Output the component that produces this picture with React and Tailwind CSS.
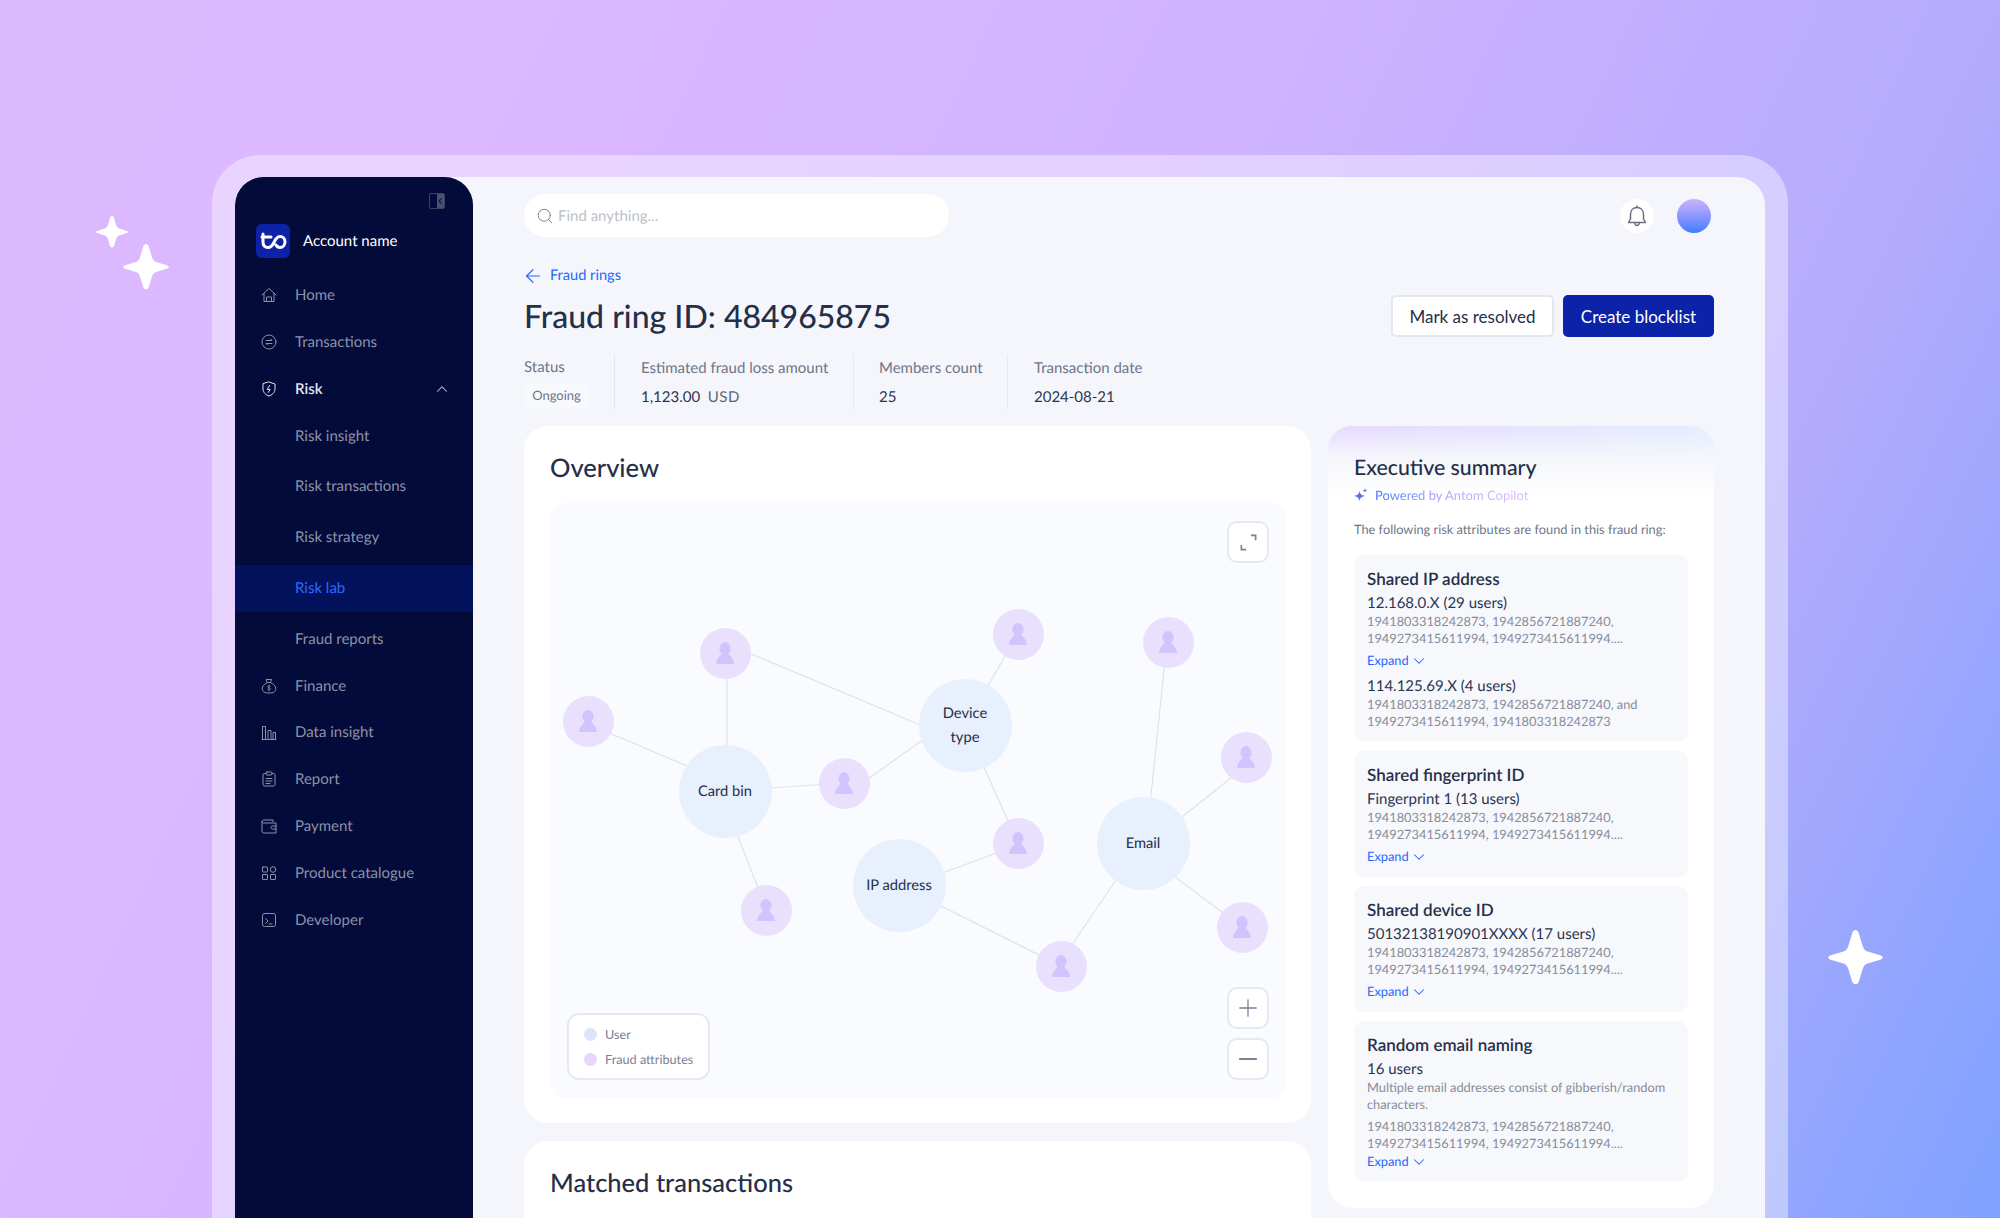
import { ChevronDown, ChevronUp, ArrowLeft, Search, Plus, Minus } from "lucide-react";

const STAR = "M50 0 C53 0 55 3 56 6 L63 29 C65 35 67 37 72 39 L95 46 C101 48 101 52 95 54 L72 61 C67 63 65 65 63 71 L56 94 C54 100 46 100 44 94 L37 71 C35 65 33 63 28 61 L5 54 C-1 52 -1 48 5 46 L28 39 C33 37 35 35 37 29 L44 6 C45 3 47 0 50 0 Z";

function Star({ className }) {
  return (
    <svg viewBox="0 0 100 100" className={className} fill="white">
      <path d={STAR} />
    </svg>
  );
}

function NavIcon({ children }) {
  return (
    <svg viewBox="0 0 16 16" className="w-4 h-4 shrink-0" fill="none" stroke="currentColor" strokeWidth="1" strokeLinecap="round" strokeLinejoin="round">
      {children}
    </svg>
  );
}

const icons = {
  home: (
    <NavIcon>
      <path d="M1 8 8 1.5 15 8M3 6.5V14.5H13V6.5M5.5 14.5V10H10.5V14.5" />
    </NavIcon>
  ),
  transactions: (
    <NavIcon>
      <circle cx="8" cy="8" r="7" />
      <path d="M5 6.5H11L9.5 5M11 9.5H5L6.5 11" />
    </NavIcon>
  ),
  risk: (
    <NavIcon>
      <path d="M8 1 14 3V8C14 11.5 11 14 8 15 5 14 2 11.5 2 8V3Z" />
      <path d="M8.6 4.5 6.2 8.4H9.2L7.2 11.5" />
    </NavIcon>
  ),
  finance: (
    <NavIcon>
      <path d="M5.5 1.5H10.5L9.5 4.5H6.5ZM6.5 4.5C3 6 1.2 8.6 1.2 10.8 1.2 13.4 3.4 15 8 15S14.8 13.4 14.8 10.8C14.8 8.6 13 6 9.5 4.5" />
      <path d="M9.4 8.2C9 7.6 7 7.4 6.8 8.6 6.6 10 9.6 9.6 9.4 11 9.2 12.2 7 12 6.6 11.3M8 6.9V12.8" strokeWidth="0.8" />
    </NavIcon>
  ),
  data: (
    <NavIcon>
      <path d="M1 14.5H15M1.5 14.5V1.5H4.5V14.5M7 14.5V5.5H10V14.5M12 14.5V7.5H14.5V14.5" />
    </NavIcon>
  ),
  report: (
    <NavIcon>
      <path d="M5 2.5H3.2C2.6 2.5 2 3 2 3.6V13.6C2 14.4 2.6 15 3.4 15H12.6C13.4 15 14 14.4 14 13.6V3.6C14 3 13.4 2.5 12.8 2.5H11" />
      <rect x="5" y="1" width="6" height="3" rx="1" />
      <path d="M5 7.5H11M5 10H11M5 12.5H9" />
    </NavIcon>
  ),
  payment: (
    <NavIcon>
      <path d="M12 3.5V2H3C1.9 2 1 2.8 1 4V13.5C1 14.3 1.7 15 2.5 15H15V5H2.5C1.7 5 1 4.5 1 3.6" />
      <path d="M15 8H11.5C10.6 8 10 8.7 10 9.5S10.6 11 11.5 11H15" />
    </NavIcon>
  ),
  product: (
    <NavIcon>
      <rect x="1.5" y="2" width="5" height="5" rx="0.5" />
      <circle cx="12" cy="4.5" r="2.8" />
      <rect x="1.5" y="9.5" width="5" height="5" rx="0.5" />
      <rect x="9.5" y="9.5" width="5" height="5" rx="0.5" />
    </NavIcon>
  ),
  developer: (
    <NavIcon>
      <rect x="1.5" y="1.5" width="13" height="13" rx="2" />
      <path d="M4.5 6.5 7 9 4.5 11.5M8 12H11" />
    </NavIcon>
  ),
};

function NavItem({ icon, label }) {
  return (
    <div className="h-[46.8px] flex items-center pl-[26px] gap-[18px] text-[15px] text-[#8d92a8]">
      {icon}
      <span>{label}</span>
    </div>
  );
}

function SubItem({ label, active }) {
  return (
    <div className={`h-[46.8px] flex items-center pl-[60px] text-[15px] ${active ? "bg-[#03125c] text-[#2a6bff]" : "text-[#8d92a8]"}`}>
      {label}
    </div>
  );
}

function Sidebar() {
  return (
    <aside className="w-[238px] shrink-0 bg-[#020b3a] rounded-t-[28px] pt-4">
      <div className="flex justify-end pr-[28px]">
        <svg viewBox="0 0 16 16" className="w-4 h-4" fill="none">
          <rect x="0.5" y="0.5" width="15" height="15" rx="1.5" stroke="#3b4363" />
          <rect x="8" y="1" width="7" height="14" fill="#4a5170" />
          <path d="M12.5 5.5 10 8 12.5 10.5" stroke="#0f1745" strokeWidth="1.2" />
        </svg>
      </div>
      <div className="mt-[15px] pl-[21px] flex items-center gap-[13px]">
        <div className="w-[34px] h-[34px] rounded-[6px] bg-[#0c22a8]">
          <svg viewBox="0 0 34 34" fill="none" stroke="white" strokeWidth="3" strokeLinecap="round">
            <path d="M7 10V18C7 21.5 9 23.5 12 23.5 15 23.5 16.5 21.5 18 18.5 19.2 15.8 20.5 12.5 24 12.5 27 12.5 29 14.8 29 17.8S27 23.5 24 23.5C22 23.5 20.8 22.5 20 21" />
            <path d="M6 13H15" />
          </svg>
        </div>
        <span className="text-[15px] text-white">Account name</span>
      </div>
      <nav className="mt-[14px]">
        <NavItem icon={icons.home} label="Home" />
        <NavItem icon={icons.transactions} label="Transactions" />
        <div className="h-[46.8px] flex items-center pl-[26px] pr-[22px] gap-[18px] text-[15px] font-semibold text-[#e4e6ee]">
          {icons.risk}
          <span className="flex-1">Risk</span>
          <ChevronUp className="w-[18px] h-[18px] text-[#c8cad6]" strokeWidth={1.4} />
        </div>
        <div className="flex flex-col gap-1">
          <SubItem label="Risk insight" />
          <SubItem label="Risk transactions" />
          <SubItem label="Risk strategy" />
          <SubItem label="Risk lab" active />
          <SubItem label="Fraud reports" />
        </div>
        <NavItem icon={icons.finance} label="Finance" />
        <NavItem icon={icons.data} label="Data insight" />
        <NavItem icon={icons.report} label="Report" />
        <NavItem icon={icons.payment} label="Payment" />
        <NavItem icon={icons.product} label="Product catalogue" />
        <NavItem icon={icons.developer} label="Developer" />
      </nav>
    </aside>
  );
}

const smallNodes = [
  [725, 653], [1018, 634], [1168, 642], [588, 721], [1246, 757],
  [844, 783], [1018, 843], [766, 910], [1242, 927], [1061, 966],
];

const bigNodes = [
  { x: 725, y: 791, label: ["Card bin"] },
  { x: 965, y: 725, label: ["Device", "type"] },
  { x: 899, y: 885, label: ["IP address"] },
  { x: 1143, y: 843, label: ["Email"] },
];

const edges = [
  [727, 653, 727, 791], [725, 643, 930, 729], [588, 724, 725, 782],
  [844, 783, 725, 791], [844, 796, 965, 710], [1018, 634, 965, 725],
  [1018, 843, 965, 725], [899, 889, 1018, 845], [725, 804, 766, 908],
  [1061, 966, 899, 885], [1061, 961, 1143, 840], [1167, 642, 1146, 843],
  [1246, 766, 1143, 848], [1143, 853, 1242, 927],
];

// graph panel starts at 550,503 in page coords
const OX = 550;
const OY = 503;

function GraphButton({ children, className = "" }) {
  return (
    <div className={`w-[42px] h-[42px] rounded-[10px] bg-white border-2 border-[#e6e9f3] flex items-center justify-center text-[#7a8096] ${className}`}>
      {children}
    </div>
  );
}

function Graph() {
  return (
    <div className="relative mt-[18px] w-[736px] h-[595px] rounded-[14px] bg-[#fafbfe]">
      <svg className="absolute inset-0 w-full h-full" fill="none" stroke="#dfe2ee" strokeWidth="1.2">
        {edges.map(([x1, y1, x2, y2], i) => (
          <line key={i} x1={x1 - OX} y1={y1 - OY} x2={x2 - OX} y2={y2 - OY} />
        ))}
      </svg>
      {smallNodes.map(([x, y], i) => (
        <div
          key={i}
          className="absolute w-[51px] h-[51px] -ml-[25.5px] -mt-[25.5px] rounded-full bg-[#e9e0fe] flex items-center justify-center"
          style={{ left: x - OX, top: y - OY }}
        >
          <svg viewBox="0 0 18 22" className="w-[18px] h-[22px]" fill="#d1c3fd">
            <ellipse cx="9" cy="6.5" rx="5.6" ry="6.5" />
            <path d="M5.5 11.5C5.2 14 0.6 15 0 22H18C17.4 15 12.8 14 12.5 11.5Z" />
          </svg>
        </div>
      ))}
      {bigNodes.map((n) => (
        <div
          key={n.label[0]}
          className="absolute w-[93px] h-[93px] -ml-[46.5px] -mt-[46.5px] rounded-full bg-[#e8effd] flex flex-col items-center justify-center text-[14.7px] leading-[24px] text-[#252f4a]"
          style={{ left: n.x - OX, top: n.y - OY }}
        >
          {n.label.map((t) => (
            <span key={t}>{t}</span>
          ))}
        </div>
      ))}
      <GraphButton className="absolute top-[18px] right-[17px]">
        <svg viewBox="0 0 16 16" className="w-[19px] h-[19px]" fill="none" stroke="currentColor" strokeWidth="1.4">
          <path d="M10 2H14V6M2 10V14H6" />
        </svg>
      </GraphButton>
      <div className="absolute right-[17px] bottom-[18px] flex flex-col gap-[9px]">
        <GraphButton>
          <Plus className="w-7 h-7" strokeWidth={1.1} />
        </GraphButton>
        <GraphButton>
          <Minus className="w-7 h-7" strokeWidth={1.6} />
        </GraphButton>
      </div>
      <div className="absolute left-[17px] bottom-[18px] w-[143px] h-[67px] rounded-[12px] bg-white border-2 border-[#e6e9f3] pl-[15px] flex flex-col justify-center gap-[7px] text-[12.7px] leading-[18px] text-[#7b8195]">
        <div className="flex items-center gap-[8px]">
          <span className="w-[13px] h-[13px] rounded-full bg-[#dfe3f8]" />
          User
        </div>
        <div className="flex items-center gap-[8px]">
          <span className="w-[13px] h-[13px] rounded-full bg-[#e4d6ff]" />
          Fraud attributes
        </div>
      </div>
    </div>
  );
}

function Expand({ className = "mt-[3px]" }) {
  return (
    <div className={`flex items-center gap-[1px] text-[12.8px] leading-[18px] text-[#1d66ff] ${className}`}>
      Expand
      <ChevronDown className="w-[18px] h-[18px] mt-[2px]" strokeWidth={1.4} />
    </div>
  );
}

function Ids({ text = ["1941803318242873, 1942856721887240,", "1949273415611994, 1949273415611994...."] }) {
  return (
    <div className="text-[12.8px] leading-[17px] text-[#868b9c]">
      {text.map((t) => (
        <div key={t}>{t}</div>
      ))}
    </div>
  );
}

function Attr({ title, children, className = "" }) {
  return (
    <div className={`rounded-[10px] bg-[#f7f8fb] px-[13px] pt-[13px] ${className}`}>
      <div className="text-[17px] leading-[22px] font-semibold text-[#252f4a]">{title}</div>
      {children}
    </div>
  );
}

function Sub({ children }) {
  return <div className="mt-[3px] text-[15px] leading-[20px] text-[#2a3350]">{children}</div>;
}

function Summary() {
  return (
    <div className="w-[386px] h-[782px] rounded-[24px] bg-white bg-[linear-gradient(180deg,rgba(255,255,255,0)_0%,#f5f6fb_45%,#ffffff_100%),linear-gradient(90deg,#e6d9ff,#e4edff)] bg-no-repeat bg-size-[100%_70px] pt-[27px] px-[26px]">
      <div className="text-[21.3px] leading-[28px] font-medium text-[#252f4a]">Executive summary</div>
      <div className="mt-[5px] flex items-center gap-[7px] text-[13px] leading-[18px]">
        <svg viewBox="0 0 14 14" className="w-[14px] h-[14px]" fill="#5b6ff5">
          <path d="M5.5 2.5C6 6 7 7 11 8 7 8.8 6 10 5.5 13.5 5 10 4 8.8 0 8 4 7 5 6 5.5 2.5Z" />
          <path d="M11 0C11.2 1.6 11.6 2 13.4 2.4 11.6 2.8 11.2 3.2 11 4.8 10.8 3.2 10.4 2.8 8.6 2.4 10.4 2 10.8 1.6 11 0Z" />
        </svg>
        <span className="bg-linear-to-r from-[#3b76ff] via-[#b9a6ff] to-[#dcbcff] bg-clip-text text-transparent">Powered by Antom Copilot</span>
      </div>
      <div className="mt-[16px] text-[12.8px] leading-[18px] text-[#6f7588]">The following risk attributes are found in this fraud ring:</div>
      <div className="mt-[17px] flex flex-col gap-[9px]">
        <Attr title="Shared IP address" className="h-[187px]">
          <Sub>12.168.0.X (29 users)</Sub>
          <Ids />
          <Expand />
          <div className="mt-[6px]">
            <Sub>114.125.69.X (4 users)</Sub>
            <Ids text={["1941803318242873, 1942856721887240, and", "1949273415611994, 1941803318242873"]} />
          </div>
        </Attr>
        <Attr title="Shared fingerprint ID" className="h-[126px]">
          <Sub>Fingerprint 1 (13 users)</Sub>
          <Ids />
          <Expand />
        </Attr>
        <Attr title="Shared device ID" className="h-[126px]">
          <Sub>50132138190901XXXX (17 users)</Sub>
          <Ids />
          <Expand />
        </Attr>
        <Attr title="Random email naming" className="h-[161px]">
          <Sub>16 users</Sub>
          <Ids text={["Multiple email addresses consist of gibberish/random", "characters."]} />
          <div className="mt-[5px]">
            <Ids />
          </div>
          <Expand className="-mt-[1px]" />
        </Attr>
      </div>
    </div>
  );
}

function Stat({ label, value, className = "" }) {
  return (
    <div className={`h-[55px] flex flex-col ${className}`}>
      <div className="text-[15px] leading-[20px] mt-[4px] text-[#6f7588]">{label}</div>
      <div className="text-[15px] leading-[20px] mt-[9px] text-[#2a3350]">{value}</div>
    </div>
  );
}

export default function App() {
  return (
    <div className="w-[2000px] h-[1218px] overflow-hidden flex flex-col relative bg-[linear-gradient(115deg,#ddb9ff_0%,#dab7ff_25%,#cfb3ff_50%,#b5abfd_78%,#7ea2ff_100%)] font-['Lato','Noto_Sans',sans-serif] [text-rendering:geometricPrecision]">
      <Star className="absolute left-[96px] top-[216px] w-8 h-8" />
      <Star className="absolute left-[123px] top-[244px] w-[46px] h-[46px]" />
      <Star className="absolute left-[1828px] top-[930px] w-[55px] h-[55px]" />

      <div className="mt-[155px] mx-[212px] flex-1 min-h-0 rounded-t-[48px] bg-white/40 pt-[22px] px-[23px] flex">
        <div className="flex-1 flex rounded-t-[28px] bg-[#f4f6fb] overflow-hidden">
          <Sidebar />
          <main className="flex-1 px-[51px] pt-[17px]">
            <div className="flex items-center justify-between pr-[3px]">
              <div className="w-[425px] h-[43px] rounded-full bg-white flex items-center pl-[12px] gap-[4px] text-[15px] text-[#bcc0cc]">
                <Search className="w-[18px] h-[18px] text-[#7a8096]" strokeWidth={1.3} />
                <span className="pt-[1px]">Find anything...</span>
              </div>
              <div className="flex items-center gap-[23px]">
                <div className="w-[34px] h-[34px] rounded-full bg-white flex items-center justify-center">
                  <svg viewBox="0 0 24 24" className="w-6 h-6 text-[#6b7080]" fill="none" stroke="currentColor" strokeWidth="1.5" strokeLinecap="round" strokeLinejoin="round">
                    <path d="M12 3.5C8 3.5 5.5 6.5 5.5 10.5V15L3.5 18.5H20.5L18.5 15V10.5C18.5 6.5 16 3.5 12 3.5Z" />
                    <path d="M9.5 18.5C9.8 20.3 10.8 21.5 12 21.5S14.2 20.3 14.5 18.5M12 3.5V2" />
                  </svg>
                </div>
                <div className="w-[34px] h-[34px] rounded-full bg-linear-to-b from-[#d0b0ff] to-[#3f7bff]" />
              </div>
            </div>

            <div className="mt-[29px] h-5 flex items-center gap-[6px] text-[14.6px] leading-[20px] text-[#1d66ff]">
              <ArrowLeft className="w-[22px] h-[22px] -ml-[2px]" strokeWidth={1.3} />
              Fraud rings
            </div>

            <div className="mt-[9px] h-[42px] flex items-center justify-between">
              <h1 className="text-[32px] leading-[42px] font-medium text-[#252f4a]">Fraud ring ID: 484965875</h1>
              <div className="flex gap-[9px]">
                <button className="w-[163px] h-[42px] pt-[1px] rounded-[5px] bg-white border-2 border-[#e3e7f1] text-[17px] text-[#252f4a]">Mark as resolved</button>
                <button className="w-[151px] h-[42px] pt-[1px] rounded-[5px] bg-[#0c22a8] text-[17px] text-white">Create blocklist</button>
              </div>
            </div>

            <div className="mt-[17px] flex">
              <div className="w-[91px] h-[55px] border-r border-[#dfe7f8]">
                <div className="text-[15px] leading-[20px] mt-[3px] text-[#6f7588]">Status</div>
                <div className="mt-[6px] w-[65px] h-[26px] rounded-[4px] bg-[#f8f9fc] flex items-center justify-center text-[13px] text-[#6f7588]">Ongoing</div>
              </div>
              <Stat
                className="pl-[26px] w-[239px] border-r border-[#e6e9f2]"
                label="Estimated fraud loss amount"
                value={
                  <>
                    1,123.00 &nbsp;<span className="text-[#5d6378] tracking-[0.5px]">USD</span>
                  </>
                }
              />
              <Stat className="pl-[25px] w-[154px] border-r border-[#e6e9f2]" label="Members count" value="25" />
              <Stat className="pl-[26px]" label="Transaction date" value="2024-08-21" />
            </div>

            <div className="mt-[17px] flex items-start gap-[17px]">
              <div className="w-[787px] flex flex-col gap-[18px]">
                <section className="h-[697px] rounded-[24px] bg-white pt-[25px] pl-[26px]">
                  <h2 className="text-[25.5px] leading-[34px] font-medium text-[#252f4a]">Overview</h2>
                  <Graph />
                </section>
                <section className="h-[120px] rounded-[24px] bg-white pt-[25px] pl-[26px]">
                  <h2 className="text-[25.5px] leading-[34px] font-medium text-[#252f4a]">Matched transactions</h2>
                </section>
              </div>
              <Summary />
            </div>
          </main>
        </div>
      </div>
    </div>
  );
}
